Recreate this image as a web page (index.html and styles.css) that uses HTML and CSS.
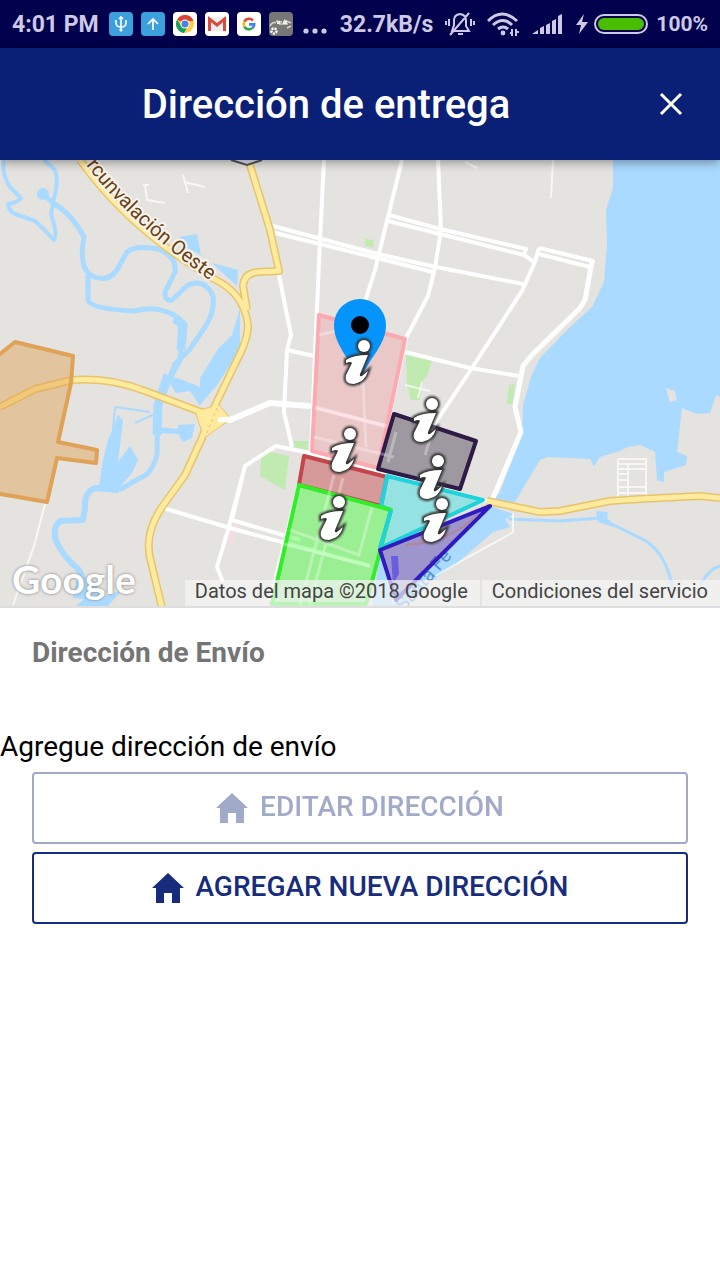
FILE: index.html
```html
<!DOCTYPE html>
<html lang="es">
<head>
    <meta charset="UTF-8">
    <meta name="viewport" content="width=device-width, initial-scale=1.0">
    <title>Dirección de entrega</title>
    <link rel="stylesheet" href="styles.css">
</head>
<body>
    <div class="status-bar">
        <span class="time">4:01 PM</span>
        <div class="notifications">
            <svg viewBox="0 0 24 24"><rect width="24" height="24" rx="4" fill="#3ba0db"/><path d="M12 5v14M7 8v3q0 4 5 4t5-4V8M10 7l2-2 2 2" fill="none" stroke="#fff" stroke-width="1.6"/><circle cx="12" cy="18" r="1.6" fill="#fff"/></svg>
            <svg viewBox="0 0 24 24"><rect width="24" height="24" rx="4" fill="#3ba0db"/><path d="M12 18V7M7 12l5-5 5 5" fill="none" stroke="#fff" stroke-width="1.7"/></svg>
            <svg viewBox="0 0 24 24"><rect width="24" height="24" rx="4" fill="#fff"/><circle cx="12" cy="12" r="9" fill="#ffce44"/><path d="M12 12L4.200 7.500A9 9 0 0 1 20.500 9H12z" fill="#dc4437"/><path d="M4.200 7.500A9 9 0 0 0 11 21l4-7-3-2-4 2z" fill="#159f5c"/><circle cx="12" cy="12" r="4.500" fill="#fff"/><circle cx="12" cy="12" r="3.500" fill="#4b80e8"/></svg>
            <svg viewBox="0 0 24 24"><rect width="24" height="24" rx="4" fill="#fff"/><rect x="3" y="5" width="18" height="14" fill="#eee"/><path d="M4.500 19V7L12 13l7.500-6v12" fill="none" stroke="#d54b3d" stroke-width="3"/></svg>
            <svg viewBox="0 0 24 24"><rect width="24" height="24" rx="4" fill="#fff"/><g fill="none" stroke-width="2.600"><path d="M16 8.500A5.300 5.300 0 0 0 7.300 9.600" stroke="#ea4335"/><path d="M7.300 9.600a5.300 5.300 0 0 0 0 5" stroke="#fbbc05"/><path d="M7.300 14.600a5.300 5.300 0 0 0 8.300 1.300" stroke="#34a853"/><path d="M15.600 15.900q1.500-1.600 1.600-3.500H12" stroke="#4285f4"/></g></svg>
            <svg viewBox="0 0 24 24"><rect width="24" height="24" rx="4" fill="#777"/><path d="M1 14q3-5 6-3M7 9l6 1M10 12h9M15 8l7 3M18 16l4-2" fill="none" stroke="#d8d5c5" stroke-width="1.500"/><path d="M8 9h3v3H8zM14 9h4v3h-4z" fill="#eee"/><circle cx="5" cy="19" r="2.500" fill="none" stroke="#fff" stroke-width="2.400" stroke-dasharray="2 1"/></svg>
        </div>
        <svg class="more" viewBox="0 0 24 24" fill="#cdc9e6"><circle cx="3" cy="19" r="2.600"/><circle cx="12" cy="19" r="2.600"/><circle cx="21" cy="19" r="2.600"/></svg>
        <div class="system">
            <span class="speed">32.7kB/s</span>
            <svg class="bell" viewBox="0 0 30 26" fill="none" stroke="#cdc9e6" stroke-width="2"><path d="M7 20h17l-3-5V9q0-5-6-6-6 1-6 6v5zM13 23h5M5 24L24 2M4 8v7M1 10v4M26 8v7M29 10v4"/></svg>
            <svg class="wifi" viewBox="0 0 32 24" fill="none" stroke="#cdc9e6" stroke-width="3"><path d="M1 9q14-14 29 0M6 13q10-9 19 0M11 17q5-4 10 0"/><circle cx="16" cy="21" r="2.400" fill="#cdc9e6" stroke="none"/><path d="M25 17v7M29 17v7M23 21h2M29 20h3" stroke-width="2"/></svg>
            <svg class="signal" viewBox="0 0 31 22" fill="#cdc9e6"><path d="M0 21l6-4v4zM8 15l4-2v8H8zM14 12l4-2v11h-4zM20 8l4-2v15h-4zM26 3l4-2v20h-4z"/></svg>
            <svg class="bolt" viewBox="0 0 12 20" fill="#cdc9e6"><path d="M8 0L0 11h5L3 20l9-12H6z"/></svg>
            <svg class="battery" viewBox="0 0 54 20"><rect x="1" y="1" width="52" height="18" rx="9" fill="none" stroke="#cdc9e6" stroke-width="2"/><rect x="4" y="4" width="46" height="12" rx="6" fill="#49bd00"/></svg>
            <span class="charge">100%</span>
        </div>
    </div>

    <header class="toolbar">
        <h1>Dirección de entrega</h1>
        <button class="close" type="button" aria-label="Cerrar">
            <svg viewBox="0 0 24 24"><path d="M2 2l20 20M22 2L2 22" fill="none" stroke="#fff" stroke-width="3"/></svg>
        </button>
    </header>

    <main>
        <div class="map">
            <svg class="map-canvas" viewBox="0 160 720 446" preserveAspectRatio="xMidYMid slice">
                <defs>
                    <path id="circunvalacion" d="M86 165Q135 229 225 291"/>
                    <g id="info">
                        <path d="M-18 14Q-11 9 4 9L-4 28Q-5 31-2 30L4 25Q1 36-10 38-20 38-18 29L-12 17Q-13 15-18 17Z"/>
                        <circle r="6"/>
                    </g>
                    <filter id="soft" x="-30%" y="-30%" width="160%" height="160%"><feGaussianBlur stdDeviation="1"/></filter>
                </defs>
                <rect y="160" width="720" height="448" fill="#e4e3df"/>

                <!-- agua -->
                <g fill="#aadaff">
                    <path d="M613 160L613 188 606 210 607 245 604 282 592 307 570 327 540 358 532 374 523 405 522 435 500 492 490 505 515 502 540 460 548 457 590 459 594 466 600 457 620 451 628 447 640 445 655 452 657 480 664 482 664 472 686 465 687 456 677 452 682 408 697 414 710 413 716 395 720 397V160z"/>
                    <path d="M490 506L514 514 505 519 510 527 493 532 455 565 425 585 400 608H390L440 555z"/>
                    <path d="M380 553L372 608H393L389 585z"/>
                    <path d="M179 237L197 234 201 255 187 248zM212 263L238 270 237 286zM240 308L232 335 218 349 210 362 200 378 200 405 217 385 240 350z"/>
                    <path d="M118 415L123 420 118 462 130 446 138 460 132 473 114 493 99 487 103 460 108 440zM158 427L178 429 178 425 195 424 192 438 183 442 178 434 158 433zM165 375L176 393 190 391 200 406 205 394 220 382 200 387 180 379z"/>
                    <path d="M596 511L608 512 607 518 617 528 598 522zM76 580L88 590 91 578 105 596 122 590 108 606H76L84 599 73 598z"/>
                    <circle cx="43" cy="194" r="6"/>
                </g>
                <g fill="none" stroke="#aadaff" stroke-linejoin="round">
                    <path d="M4 160Q1 173 10 187L21 198Q17 203 8 204 9 213 18 215L35 221Q43 228 54 240 58 235 51 214L54 198Q59 180 55 170L44 160" stroke-width="4"/>
                    <path d="M43 194L53 203Q72 214 84 237 78 268 92 276 108 283 117 270L127 252Q135 245 158 249 177 256 175 272L165 292Q165 302 172 300L188 285Q205 278 213 296 215 312 205 327L190 349 175 364 166 388 158 405 157 455Q151 475 140 478L119 490" stroke-width="5"/>
                    <path d="M88 275L88 300Q90 309 135 311 155 305 174 315 184 325 180 360L168 382" stroke-width="5"/>
                    <path d="M175 318L183 325 181 350" stroke-width="9"/>
                    <path d="M168 375L158 405 157 435" stroke-width="9"/>
                    <path d="M119 490L95 488Q84 492 85 508L83 520 60 521Q51 530 57 543 63 556 79 570L90 592" stroke-width="6"/>
                    <path d="M135 423L155 414M113 430L115 407 150 412" stroke-width="2"/>
                    <path d="M508 519L560 521 600 518" stroke-width="3"/>
                    <path d="M610 523L646 541Q667 555 673 590M700 585Q710 568 720 566" stroke-width="3"/>
                </g>
                <path d="M666 388l9 3 2 9-7 2z" fill="#e4e3df"/>

                <!-- parques -->
                <g fill="#bfeab0">
                    <path d="M406 355L432 361 428 374 422 382 420 400 411 400 407 384zM365 239l8 1 1 7-9-1zM262 450L289 456 285 490 260 476zM294 441h14v9l-14-3zM509 385l6-1-3 20-5-1z"/>
                </g>
                <path d="M224 531l11 2-2 11-11-3zM230 525h9v8h-9z" fill="#f3dfe2"/>

                <!-- calles -->
                <g fill="none" stroke="#fff" stroke-width="4" stroke-linejoin="round">
                    <path d="M324 160L320 240 316 330 311 455M402 160L375 270 365 302M438 160L441 230 435 268 428 296 406 338 378 468"/>
                    <path d="M269 225L378 254 436 267 523 284M271 232L320 244 433 272M389 215L440 229 526 249 524 255 388 221M524 255L534 262"/>
                    <path d="M405 352L470 368 519 376M539 248L535 262 522 291 470 371 434 425"/>
                    <path d="M539 248L593 261 590 267 539 254"/>
                    <path d="M592 261L585 300 580 308 532 355 523 366 515 407 521 432 493 498" stroke-width="5"/>
                    <path d="M279 275L291 335 287 350 284 412 292 447M287 350L314 356"/>
                    <path d="M216 420L230 420 270 403 310 406" stroke-width="6"/>
                    <path d="M310 406L385 426"/>
                    <path d="M160 507L230 528 300 547 370 566M232 520L300 540M232 520L245 466 276 446 310 453 487 501M245 466L228 530 217 567 223 582M299 485L270 600"/>
                </g>
                <g fill="none" stroke="#fff" stroke-width="2" opacity=".7">
                    <path d="M143 185h6M145 185l2 15 18 3M183 175l5 18M184 182l21 5M553 160l-2 38M465 162l12 6M45 504L34 546 13 605M405 385l25 6M422 382l-4 16"/>
                    <path d="M513 513L513 532 505 537 470 556 420 585"/>
                    <path d="M618 459h28v36M618 459v38M628 464v36M618 464h28M618 469h28M618 474h10M618 480h10M618 487h28M618 493h28"/>
                </g>

                <g fill="none" stroke="#e9c36b" stroke-width="8" stroke-linejoin="round">
                    <path id="autopista" d="M0 407L35 389 72 380Q110 377 145 391L217 418M80 160Q130 230 214 279 244 293 248 325 248 340 236 362L208 420 202 438 185 475 162 507Q143 535 151 562L162 608M250 165L270 230 279 271 258 272Q244 273 243 286L247 310M487 501L540 512 560 511 610 501 640 499 700 496 720 498"/>
                </g>
                <path d="M195 411L219 405 231 419 204 438z" fill="#ffe99c" stroke="#e9c36b"/>
                <use href="#autopista" fill="none" stroke="#ffeb9e" stroke-width="5" class="road-fill"/>
                <path d="M207 433l10-25" stroke="#e9c36b" stroke-dasharray="3 3"/>
                <path d="M218 420l14-1" stroke="#fff" stroke-width="5"/>
                <path d="M231 160l16 5 15-5" fill="#e5e5f0" stroke="#555" stroke-width="2"/>
                <text class="road-name"><textPath href="#circunvalacion">rcunvalación Oeste</textPath></text>
                <text class="river-name" transform="translate(404 612) rotate(-49)">Santa Fe</text>

                <!-- zonas de entrega -->
                <g stroke-width="4" stroke-linejoin="round" fill-opacity=".45">
                    <path d="M-5 358L15 342 73 356 71 383 58 442 97 450 96 463 57 458 47 502-5 493z" fill="#e0a050" stroke="#dfa256"/>
                    <path d="M319 315L405 339 378 468 312 451z" fill="#f4a6ae" stroke="#fca9b1"/>
                    <path d="M304 456L387 477 381 506 299 485z" fill="#c84048" stroke="#c3464c"/>
                    <path d="M387 476L483 500 380 548 391 510 381 506z" fill="#36e1e7" stroke="#20d2dc"/>
                    <path d="M299 485L391 510 366 604 272 604z" fill="#43fc38" stroke="#32ee2a"/>
                    <path d="M391 510L380 548" stroke="#20d2dc"/>
                    <path d="M394 414L476 441 460 489 378 469z" fill="#493b56" stroke="#2f1c46"/>
                    <path d="M490 506L380 550 396 600z" fill="#4a36b8" stroke="#2f1bc0"/>
                </g>
                <g fill="none" stroke="#fff" stroke-width="3" opacity=".3">
                    <path d="M319 335l17-4M363 380l3 67M315 408l72 18M314 437l80 20M334 475l-34 130M343 478l-34 130M280 543l90 23M290 530l69 25 13-48M388 462l8-30M425 455l12-38"/>
                </g>
                <path d="M391 556h7l1 18-6 10z" fill="#6a5ee0"/>
                <path d="M406 545Q450 542 477 515" fill="none" stroke="#b08797" stroke-width="2"/>

                <path d="M359 386C354 360 334 348 334 325A26 26 0 0 1 386 325C386 348 365 360 359 386Z" fill="#0594fb"/>
                <circle cx="360" cy="325" r="9"/>

                <g fill="none" stroke="#333" stroke-width="4" filter="url(#soft)">
                    <use href="#info" x="364" y="346"/><use href="#info" x="350" y="434"/><use href="#info" x="432" y="404"/>
                    <use href="#info" x="438" y="461"/><use href="#info" x="442" y="504"/><use href="#info" x="339" y="502"/>
                </g>
                <g fill="#fff">
                    <use href="#info" x="364" y="346"/><use href="#info" x="350" y="434"/><use href="#info" x="432" y="404"/>
                    <use href="#info" x="438" y="461"/><use href="#info" x="442" y="504"/><use href="#info" x="339" y="502"/>
                </g>
            </svg>
            <span class="map-logo">Google</span>
            <div class="map-credits">
                <span>Datos del mapa ©2018 Google</span>
                <a href="#">Condiciones del servicio</a>
            </div>
        </div>

        <h2>Dirección de Envío</h2>
        <p class="hint">Agregue dirección de envío</p>
        <div class="actions">
            <button class="button" type="button" disabled>
                <svg viewBox="0 0 32 30"><path d="M16 0l16 15h-4v15h-8V20h-8v10H4V15H0z" fill="currentColor"/></svg>
                EDITAR DIRECCIÓN
            </button>
            <button class="button" type="button">
                <svg viewBox="0 0 32 30"><path d="M16 0l16 15h-4v15h-8V20h-8v10H4V15H0z" fill="currentColor"/></svg>
                AGREGAR NUEVA DIRECCIÓN
            </button>
        </div>
    </main>
</body>
</html>
```
FILE: styles.css
```css
* {
    box-sizing: border-box;
}
body {
    margin: 0;
    font-family: Roboto, sans-serif;
    background: #fff;
    color: #000;
}
svg {
    display: block;
    flex: none;
}
.status-bar {
    display: flex;
    align-items: center;
    height: 48px;
    padding: 0 12px;
    background: #01004c;
    color: #cdc9e6;
    font-size: 23px;
    font-weight: 700;
    white-space: nowrap;
}
.notifications {
    display: flex;
    gap: 8px;
    margin: 0 10px;
}
.notifications svg {
    width: 24px;
    height: 24px;
}
.more {
    width: 24px;
    height: 24px;
}
.system {
    display: flex;
    align-items: center;
    margin-left: auto;
}
.bell {
    width: 30px;
    height: 26px;
    margin: 0 12px;
}
.wifi {
    width: 32px;
    height: 24px;
}
.signal {
    width: 31px;
    height: 22px;
    margin: 0 13px;
}
.bolt {
    width: 12px;
    height: 20px;
    margin-right: 6px;
}
.battery {
    width: 54px;
    height: 20px;
    margin-right: 8px;
}
.charge {
    font-size: 21px;
}
.toolbar {
    position: relative;
    z-index: 1;
    display: flex;
    align-items: center;
    height: 112px;
    padding: 0 6px 0 24px;
    background: #0a2077;
    color: #fff;
    box-shadow: 0 2px 10px rgba(0, 0, 0, 0.4);
}
.toolbar h1 {
    flex: 1;
    margin: 0;
    font-size: 40px;
    font-weight: 500;
    text-align: center;
}
.close {
    display: flex;
    align-items: center;
    justify-content: center;
    width: 86px;
    height: 86px;
    padding: 0;
    border: none;
    background: none;
    cursor: pointer;
}
.close svg {
    width: 24px;
    height: 24px;
}
.map {
    position: relative;
    border-bottom: 2px solid #dedede;
}
.map-canvas {
    width: 100%;
    height: 446px;
}
.road-fill {
    stroke-linejoin: round;
}
.road-name {
    font-size: 20px;
    fill: #6b4012;
    stroke: #f8f4ec;
    stroke-width: 4px;
    stroke-linejoin: round;
    paint-order: stroke;
}
.river-name {
    font-size: 19px;
    fill: #5491d0;
}
.map-logo {
    position: absolute;
    left: 12px;
    bottom: 4px;
    font-family: Lato, sans-serif;
    font-size: 39px;
    font-weight: 700;
    line-height: 46px;
    color: #fff;
    text-shadow: 0 0 3px #777;
}
.map-credits {
    position: absolute;
    right: 0;
    bottom: 0;
    display: flex;
    gap: 2px;
    font-size: 20px;
    line-height: 22px;
    white-space: nowrap;
}
.map-credits span,
.map-credits a {
    padding: 0 12px 4px 10px;
    background: rgba(245, 245, 245, 0.7);
    color: #444;
    text-decoration: none;
}
h2 {
    margin: 28px 32px 0;
    font-size: 28px;
    font-weight: 700;
    line-height: 34px;
    color: #757575;
}
.hint {
    margin: 60px 0 8px;
    font-size: 28px;
    line-height: 34px;
}
.actions {
    display: grid;
    gap: 8px;
    padding: 0 32px;
}
.button {
    display: flex;
    align-items: center;
    justify-content: center;
    gap: 12px;
    height: 72px;
    padding: 0 0 4px;
    border: 2px solid #182c7d;
    border-radius: 4px;
    background: #fff;
    color: #182c7d;
    font-family: inherit;
    font-size: 28px;
    font-weight: 500;
    cursor: pointer;
}
.button:disabled {
    opacity: 0.4;
    cursor: default;
}
.button svg {
    width: 32px;
    height: 30px;
    margin-top: 4px;
}
```
